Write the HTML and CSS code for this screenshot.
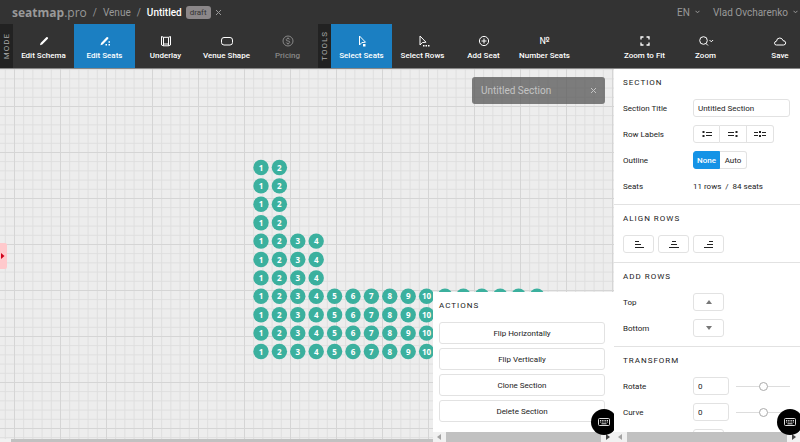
FILE: index.html
```
<!DOCTYPE html>
<html lang="en">
<head>
  <meta charset="UTF-8" />
  <meta name="viewport" content="width=device-width, initial-scale=1.0" />
  <title>Untitled - seatmap.pro</title>
  <link rel="stylesheet" href="styles.css">
</head>
<body>
  <header class="topbar">
    <nav class="crumbs">
      <a class="logo" href="#"><strong>seatmap</strong>.pro</a>
      <span>/</span>
      <a href="#">Venue</a>
      <span>/</span>
      <a class="current" href="#">Untitled</a>
      <span class="badge">draft</span>
      <button class="close" aria-label="Close schema">
        <svg width="7" height="7" viewBox="0 0 7 7"><path d="M1 1l5 5M6 1l-5 5"/></svg>
      </button>
    </nav>
    <div class="account">
      <button>EN <svg width="5" height="4" viewBox="0 0 5 4"><path d="M.5 .8l2 2 2-2"/></svg></button>
      <button>Vlad Ovcharenko <svg width="5" height="4" viewBox="0 0 5 4"><path d="M.5 .8l2 2 2-2"/></svg></button>
    </div>
  </header>

  <div class="toolbar">
    <div class="group-label"><span>MODE</span></div>
    <button class="tool">
      <svg width="16" height="12" viewBox="0 0 16 12"><path class="fill" d="M4 10.2l.6-2.2L10.300 2.200q.6-.6 1.200 0l.4.4q.5.6 0 1.200L6.200 9.600z"/></svg>
      Edit Schema
    </button>
    <button class="tool active">
      <svg width="16" height="12" viewBox="0 0 16 12"><path class="fill" d="M3.500 10.200l.6-2.200L9.600 2.200q.6-.6 1.200 0l.4.4q.5.6 0 1.200L5.700 9.600zM8.500 9h1.500v1.500H8.500zM11.500 9H13v1.500h-1.500zM11.500 6.300H13v1.500h-1.500z"/></svg>
      Edit Seats
    </button>
    <button class="tool">
      <svg width="16" height="12" viewBox="0 0 16 12"><path d="M3.500 1.500l2 .8h5l2-.8v8.500l-2 .8h-5l-2-.8zM5.500 2.300v8.500M10.500 2.300v8.500M5.500 9h5"/></svg>
      Underlay
    </button>
    <button class="tool">
      <svg width="16" height="12" viewBox="0 0 16 12"><rect x="2.500" y="2.500" width="11" height="7.500" rx="2.500"/></svg>
      Venue Shape
    </button>
    <button class="tool" disabled>
      <svg width="16" height="12" viewBox="0 0 16 12"><circle cx="8" cy="6" r="5"/><path d="M9.800 4.500Q9.500 3.500 8 3.500T6.200 4.700 8 6t1.800 1.300T8 8.500 6.200 7.500M8 2.500v1M8 8.500v1"/></svg>
      Pricing
    </button>
    <div class="group-label"><span>TOOLS</span></div>
    <button class="tool active">
      <svg width="16" height="12" viewBox="0 0 16 12"><path d="M5.500 1v9l2.300-2.400 3.700-.4z"/><path class="fill" d="M9 9h2.500v2.500H9z"/></svg>
      Select Seats
    </button>
    <button class="tool">
      <svg width="16" height="12" viewBox="0 0 16 12"><path d="M5 1v9l2.300-2.400 3.700-.4z"/><path class="fill" d="M8 10h1.500v1.500H8zM10.500 10H12v1.500h-1.500zM13 10h1.500v1.500H13z"/></svg>
      Select Rows
    </button>
    <button class="tool">
      <svg width="16" height="12" viewBox="0 0 16 12"><circle cx="8" cy="6" r="4.600"/><path d="M8 3.500v5M5.500 6h5"/></svg>
      Add Seat
    </button>
    <button class="tool">
      <span class="numero">№</span>
      Number Seats
    </button>
    <div class="view-tools">
      <button class="tool">
        <svg width="16" height="12" viewBox="0 0 16 12"><path class="thick" d="M4 4.500V2h2.500M9.500 2H12v2.500M12 7.500V10H9.500M6.500 10H4V7.500"/></svg>
        Zoom to Fit
      </button>
      <button class="tool">
        <svg width="16" height="12" viewBox="0 0 16 12"><circle cx="5.500" cy="5.500" r="3.800"/><path d="M8 8.500l2 2M11.500 5l1.800 1.800L15.100 5"/></svg>
        Zoom
      </button>
      <button class="tool save">
        <svg width="16" height="12" viewBox="0 0 16 12"><path d="M4.500 10Q2.500 10 2.500 8.200T4.500 6.200Q4.700 3 7.800 3q2.500 0 3.200 2.600Q13.700 5.800 13.700 7.900 13.600 10 11.500 10z"/></svg>
        Save
      </button>
    </div>
  </div>

  <div class="workspace">
    <main class="stage">
      <svg class="canvas" id="canvas">
        <defs>
          <pattern id="minor" x="4.800" y=".2" width="9.200" height="9.200" patternUnits="userSpaceOnUse">
            <path d="M0 .5h9.200M.5 0v9.200" stroke="#dedede"/>
          </pattern>
          <pattern id="major" x="14" y="37" width="46" height="46" patternUnits="userSpaceOnUse">
            <path d="M0 .5h46M.5 0v46" stroke="#d5d5d5"/>
          </pattern>
        </defs>
        <rect width="100%" height="100%" fill="url(#minor)"/>
        <rect width="100%" height="100%" fill="url(#major)"/>
        <g id="seats"></g>
      </svg>

      <button class="drawer-tab" aria-label="Open drawer">
        <svg width="5" height="6" viewBox="0 0 5 6"><path d="M1 0l3.500 3L1 6z"/></svg>
      </button>

      <div class="section-tag">
        <span>Untitled Section</span>
        <button class="close" aria-label="Deselect section">
          <svg width="7" height="7" viewBox="0 0 7 7"><path d="M1 1l5 5M6 1l-5 5"/></svg>
        </button>
      </div>

      <div class="stage-scroll"><div class="thumb"></div></div>

      <section class="actions" id="actions">
        <div class="actions-body">
          <h2>Actions</h2>
          <button class="btn">Flip Horizontally</button>
          <button class="btn">Flip Vertically</button>
          <button class="btn">Clone Section</button>
          <button class="btn">Delete Section</button>
        </div>
        <div class="scrollbar">
          <svg width="4" height="6" viewBox="0 0 4 6"><path d="M4 0v6L0 3z"/></svg>
          <div class="thumb"></div>
          <svg class="dark" width="4" height="6" viewBox="0 0 4 6"><path d="M0 0v6l4-3z"/></svg>
        </div>
        <button class="keys" aria-label="Keyboard shortcuts">
          <svg width="12" height="8" viewBox="0 0 12 8"><rect x=".5" y=".5" width="11" height="7" rx="1"/><path d="M2 2.500h1.300M4.200 2.500h1.300M6.500 2.500h1.300M8.700 2.500H10M2 4h1.300M4.200 4h1.300M6.500 4h1.300M8.700 4H10M3.500 5.800h5"/></svg>
        </button>
      </section>
    </main>

    <aside class="sidebar">
      <div class="panels">
        <section class="panel">
          <h2>Section</h2>
          <div class="row">
            <label for="title">Section Title</label>
            <input class="grow" id="title" type="text" value="Untitled Section">
          </div>
          <div class="row">
            <span class="label">Row Labels</span>
            <div class="segmented">
              <button aria-label="Left"><svg width="12" height="8" viewBox="0 0 12 8"><path class="dots" d="M2.500 1v2M2.500 5v2"/><path d="M5 2.500h6M5 5.500h6"/></svg></button>
              <button aria-label="Right"><svg width="12" height="8" viewBox="0 0 12 8"><path class="dots" d="M9.500 1v2M9.500 5v2"/><path d="M1 2.500h6M1 5.500h6"/></svg></button>
              <button aria-label="Both"><svg width="12" height="8" viewBox="0 0 12 8"><path class="dots" d="M6 1v2M6 5v2"/><path d="M0 2.500h4M0 5.500h4M8 2.500h4M8 5.500h4"/></svg></button>
            </div>
          </div>
          <div class="row">
            <span class="label">Outline</span>
            <div class="segmented">
              <button class="on">None</button>
              <button>Auto</button>
            </div>
          </div>
          <div class="row">
            <span class="label">Seats</span>
            <span>11 rows &nbsp;/&nbsp; 84 seats</span>
          </div>
        </section>

        <section class="panel">
          <h2>Align Rows</h2>
          <div class="row tight">
            <button class="btn small" aria-label="Align left"><svg width="10" height="8" viewBox="0 0 10 8"><path d="M1 1.500h4M1 4.500h6M1 7.500h9"/></svg></button>
            <button class="btn small" aria-label="Align center"><svg width="10" height="8" viewBox="0 0 10 8"><path d="M3 1.500h4M2 4.500h6M0 7.500h10"/></svg></button>
            <button class="btn small" aria-label="Align right"><svg width="10" height="8" viewBox="0 0 10 8"><path d="M5 1.500h4M3 4.500h6M0 7.500h9"/></svg></button>
          </div>
        </section>

        <section class="panel">
          <h2>Add Rows</h2>
          <div class="row">
            <span class="label">Top</span>
            <button class="btn small" aria-label="Add row on top"><svg class="arrow" width="6" height="4" viewBox="0 0 6 4"><path d="M0 4h6L3 0z"/></svg></button>
          </div>
          <div class="row">
            <span class="label">Bottom</span>
            <button class="btn small" aria-label="Add row at bottom"><svg class="arrow" width="6" height="4" viewBox="0 0 6 4"><path d="M0 0h6L3 4z"/></svg></button>
          </div>
        </section>

        <section class="panel">
          <h2>Transform</h2>
          <div class="row">
            <label for="rotate">Rotate</label>
            <input class="num" id="rotate" type="text" value="0">
            <input type="range" min="-180" max="180" value="0" aria-label="Rotate">
          </div>
          <div class="row">
            <label for="curve">Curve</label>
            <input class="num" id="curve" type="text" value="0">
            <input type="range" min="-50" max="50" value="0" aria-label="Curve">
          </div>
          <div class="row">
            <span class="label"></span>
            <button class="btn small" aria-label="Reset"></button>
          </div>
        </section>
      </div>
      <div class="scrollbar">
        <svg width="4" height="6" viewBox="0 0 4 6"><path d="M4 0v6L0 3z"/></svg>
        <div class="thumb"></div>
        <svg class="dark" width="4" height="6" viewBox="0 0 4 6"><path d="M0 0v6l4-3z"/></svg>
      </div>
      <button class="keys" aria-label="Keyboard shortcuts">
        <svg width="12" height="8" viewBox="0 0 12 8"><rect x=".5" y=".5" width="11" height="7" rx="1"/><path d="M2 2.500h1.300M4.200 2.500h1.300M6.500 2.500h1.300M8.700 2.500H10M2 4h1.300M4.200 4h1.300M6.500 4h1.300M8.700 4H10M3.500 5.800h5"/></svg>
      </button>
    </aside>
  </div>

  <script>
    // number of seats in each row, top to bottom
    const rows = [2, 2, 2, 2, 4, 4, 4, 16, 16, 16, 16];
    const pitch = 18.4;
    const origin = { x: 261, y: 98.5 };
    const ns = 'http://www.w3.org/2000/svg';
    const seats = document.getElementById('seats');
    const canvas = document.getElementById('canvas');

    function drawSeats() {
      const box = canvas.getBoundingClientRect();
      const panel = document.getElementById('actions').getBoundingClientRect();
      seats.replaceChildren();

      rows.forEach((count, r) => {
        for (let i = 0; i < count; i++) {
          const x = origin.x + i * pitch;
          const y = origin.y + r * pitch;

          const circle = document.createElementNS(ns, 'circle');
          circle.setAttribute('cx', x);
          circle.setAttribute('cy', y);
          circle.setAttribute('r', 7.7);
          seats.append(circle);

          // no number for a seat whose centre is under the actions panel
          if (box.left + x > panel.left && box.top + y > panel.top) continue;

          const text = document.createElementNS(ns, 'text');
          text.setAttribute('x', x);
          text.setAttribute('y', y + 3);
          text.textContent = i + 1;
          seats.append(text);
        }
      });
    }

    window.onload = drawSeats;
    window.onresize = drawSeats;
  </script>
</body>
</html>
```
FILE: styles.css
```
:root {
  --bar: #333;
  --blue: #1b7fc2;
  --bright: #1593e6;
  --line: #e2e2e2;
  --seat: #3bb09e;
}

* {
  box-sizing: border-box;
  margin: 0;
  padding: 0;
}

body {
  height: 100vh;
  overflow: hidden;
  display: flex;
  flex-direction: column;
  font-family: Roboto, sans-serif;
  font-size: 8px;
  color: #222;
}

button, input {
  font: inherit;
  color: inherit;
}

button {
  background: none;
  border: none;
  cursor: pointer;
}

a {
  color: inherit;
  text-decoration: none;
}

svg {
  fill: none;
  stroke: currentColor;
}

/* top bar */
.topbar {
  flex: none;
  height: 24px;
  padding: 0 2px 0 12px;
  display: flex;
  justify-content: space-between;
  align-items: center;
  background: var(--bar);
  color: #999;
  font-size: 10px;
}

.crumbs {
  display: flex;
  align-items: center;
  gap: 6px;
}

.logo {
  font-family: "Open Sans", sans-serif;
  font-size: 12px;
}

.current {
  color: #fff;
  font-weight: 500;
}

.badge {
  margin-left: -2px;
  padding: 0 4px;
  line-height: 13px;
  border-radius: 3px;
  background: #8b8789;
  color: #333;
  font-size: 8px;
}

.close {
  display: flex;
}

.crumbs .close {
  margin-left: -2px;
}

.account {
  display: flex;
  gap: 13px;
}

.account button {
  display: flex;
  align-items: center;
  gap: 5px;
}

/* toolbar */
.toolbar {
  flex: none;
  height: 45px;
  display: flex;
  background: var(--bar);
  border-bottom: 1px solid #888;
  color: #fff;
}

.group-label {
  width: 13px;
  display: flex;
  align-items: center;
  justify-content: center;
  background: #222;
  color: #aaa;
  letter-spacing: 1px;
}

.group-label span {
  writing-mode: vertical-rl;
  transform: rotate(180deg);
}

.tool {
  width: 61px;
  padding-top: 5px;
  display: flex;
  flex-direction: column;
  align-items: center;
  justify-content: center;
  gap: 3px;
  line-height: 12px;
  font-weight: 500;
  white-space: nowrap;
}

.tool:disabled {
  color: #888;
}

.active {
  background: var(--blue);
}

.tool .fill {
  fill: currentColor;
  stroke: none;
}

.tool .thick {
  stroke-width: 1.3;
}

.numero {
  font-size: 10px;
  font-weight: 400;
}

.view-tools {
  width: 186px;
  margin-left: auto;
  display: flex;
}

.save {
  width: 40px;
  margin-left: auto;
}

/* workspace */
.workspace {
  flex: 1;
  min-height: 0;
  display: flex;
}

.stage {
  flex: 1;
  min-width: 0;
  position: relative;
  overflow: hidden;
  background: #ededed;
}

.canvas {
  display: block;
  width: 100%;
  height: 100%;
  stroke: none;
}

.canvas circle {
  fill: var(--seat);
}

.canvas text {
  fill: #fff;
  font-family: "Open Sans", sans-serif;
  font-size: 8px;
  font-weight: 700;
  text-anchor: middle;
}

.drawer-tab {
  position: absolute;
  left: 0;
  top: 174px;
  width: 7px;
  height: 26px;
  display: flex;
  align-items: center;
  background: #ffc9cc;
  border-radius: 0 2px 2px 0;
}

.drawer-tab svg {
  fill: #d0021b;
  stroke: none;
}

.section-tag {
  position: absolute;
  top: 8px;
  right: 9px;
  width: 133px;
  height: 27px;
  padding: 0 8px 0 9px;
  display: flex;
  align-items: center;
  justify-content: space-between;
  border-radius: 3px;
  background: rgba(85, 85, 85, 0.75);
  color: #c4c4c4;
  font-size: 10px;
}

.stage-scroll {
  position: absolute;
  left: 0;
  right: 0;
  bottom: 0;
  height: 3px;
  padding-left: 11px;
  background: #f1f1f1;
}

.thumb {
  flex: 1;
  height: 100%;
  background: #c1c1c1;
}

.actions {
  position: absolute;
  right: 0;
  bottom: 0;
  width: 181px;
  overflow: hidden;
  background: #fff;
}

.actions-body {
  padding: 7px 9px 10px 6px;
  display: flex;
  flex-direction: column;
  gap: 4px;
}

.actions-body h2 {
  margin-bottom: 5px;
}

.btn {
  height: 22px;
  border: 1px solid var(--line);
  border-radius: 3px;
  background: #fff;
}

.small {
  width: 31px;
  height: 18px;
  display: flex;
  align-items: center;
  justify-content: center;
}

.scrollbar {
  flex: none;
  height: 10px;
  padding: 0 4px;
  display: flex;
  align-items: center;
  gap: 5px;
  background: #f1f1f1;
}

.scrollbar svg {
  fill: #a3a3a3;
  stroke: none;
}

.scrollbar .dark {
  fill: #444;
}

.keys {
  position: absolute;
  right: -3px;
  bottom: 7px;
  width: 26px;
  height: 26px;
  display: flex;
  align-items: center;
  justify-content: center;
  border-radius: 50%;
  background: #000;
  color: #ddd;
}

/* sidebar */
.sidebar {
  flex: none;
  width: 186px;
  position: relative;
  overflow: hidden;
  display: flex;
  flex-direction: column;
  background: #fff;
}

.panels {
  flex: 1;
  min-height: 0;
  overflow: hidden;
}

.panel {
  padding: 7px 10px 9px 9px;
  display: flex;
  flex-direction: column;
  gap: 8px;
  border-bottom: 1px solid var(--line);
}

h2 {
  margin-bottom: 1px;
  line-height: 14px;
  font-size: 8px;
  font-weight: 400;
  letter-spacing: 1px;
  text-transform: uppercase;
}

.row {
  height: 18px;
  display: flex;
  align-items: center;
}

.tight {
  gap: 4px;
}

.row label,
.row .label {
  flex: none;
  width: 70px;
}

input[type="text"] {
  min-width: 0;
  height: 18px;
  padding: 0 4px;
  border: 1px solid var(--line);
  border-radius: 3px;
  background: #fff;
  outline: none;
}

.grow {
  flex: 1;
}

.num {
  width: 36px;
}

.segmented {
  display: flex;
}

.segmented button {
  width: 27px;
  height: 18px;
  display: flex;
  align-items: center;
  justify-content: center;
  border: 1px solid var(--line);
  border-left-width: 0;
}

.segmented button:first-child {
  border-left-width: 1px;
  border-radius: 3px 0 0 3px;
}

.segmented button:last-child {
  border-radius: 0 3px 3px 0;
}

.segmented .on {
  border-color: var(--bright);
  background: var(--bright);
  color: #fff;
  font-weight: 500;
}

.segmented .dots {
  stroke-width: 2;
}

.row svg.arrow {
  fill: #777;
  stroke: none;
}

input[type="range"] {
  flex: 1;
  min-width: 0;
  height: 10px;
  margin-left: 7px;
  appearance: none;
  background: linear-gradient(#ddd, #ddd) center / 100% 1px no-repeat;
}

input[type="range"]::-webkit-slider-thumb {
  appearance: none;
  width: 9px;
  height: 9px;
  border: 1px solid #aaa;
  border-radius: 50%;
  background: #fff;
}
```
